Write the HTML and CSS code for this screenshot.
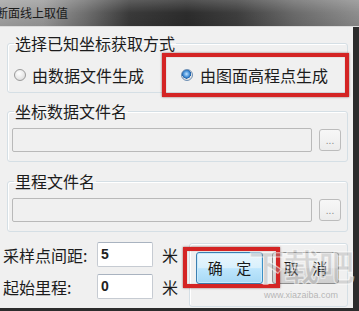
FILE: index.html
```html
<!DOCTYPE html>
<html lang="zh">
<head>
<meta charset="utf-8">
<title>断面线上取值</title>
<link rel="stylesheet" href="styles.css">
</head>
<body>
<div class="window">
  <div class="titlebar"><span class="title">断面线上取值</span></div>
  <div class="body">
    <fieldset class="group g1">
      <legend>选择已知坐标获取方式</legend>
      <div class="radios">
        <label class="radio"><span class="dot"></span>由数据文件生成</label>
        <label class="radio checked"><span class="dot"></span>由图面高程点生成</label>
      </div>
    </fieldset>
    <fieldset class="group g2">
      <legend>坐标数据文件名</legend>
      <div class="filerow">
        <div class="field"></div>
        <div class="browse">...</div>
      </div>
    </fieldset>
    <fieldset class="group g3">
      <legend>里程文件名</legend>
      <div class="filerow">
        <div class="field"></div>
        <div class="browse">...</div>
      </div>
    </fieldset>
    <div class="bottom">
      <div class="params">
        <div class="prow"><span class="plabel">采样点间距:</span><span class="pinput">5</span><span class="unit">米</span></div>
        <div class="prow"><span class="plabel">起始里程:</span><span class="pinput">0</span><span class="unit">米</span></div>
      </div>
      <div class="btnbox">
        <div class="btn primary">确&nbsp;&nbsp;&nbsp;&nbsp;定</div>
        <div class="btn">取&nbsp;&nbsp;&nbsp;&nbsp;消</div>
      </div>
    </div>
  </div>
  <div class="mark red1"></div>
  <div class="mark red2"></div>
  <div class="watermark"><span class="wm-big">下载吧</span><span class="wm-url">www.xiazaiba.com</span></div>
</div>
</body>
</html>
```
FILE: styles.css
```css
* { box-sizing: border-box; }
html, body { margin: 0; padding: 0; background: #f0f0f0; }
.window {
  position: relative;
  width: 359px;
  height: 311px;
  overflow: hidden;
  display: flex;
  flex-direction: column;
  font-family: "Noto Sans CJK SC", "Noto Sans", sans-serif;
  color: #1c1c1c;
}
.titlebar {
  height: 27px;
  flex: none;
  border-bottom: 1px solid #dcdcdc;
  background:
    linear-gradient(to bottom, rgba(255,255,255,0.18), rgba(255,255,255,0) 50%, rgba(0,0,0,0.08)),
    linear-gradient(to right, #a3a3a3 0%, #9a9a9a 12%, #6e6e6e 24%, #3a3a3a 36%, #2c2c2c 52%, #3e3e3e 66%, #6a6a6a 82%, #8e8e8e 100%);
  display: flex;
  align-items: center;
}
.title {
  margin-left: -4px;
  font-size: 12px;
  line-height: 14px;
  color: #1a1a1a;
}
.body {
  flex: 1;
  background: #f0f0f0;
  border-right: 6px solid #2c2c2c;
  border-bottom: 3px solid #2c2c2c;
  padding-top: 7px;
}
.group {
  margin: 0 5px 0 7px;
  padding: 0 5px 0 4px;
  border: 1px solid #d5dfe5;
  border-radius: 3px;
  min-inline-size: 0;
  box-shadow: inset 1px 1px 0 #fff;
}
.group legend {
  margin-left: 2px;
  padding: 0 1px;
  font-size: 16px;
  line-height: 18px;
}
.g2 { margin-top: 9px; }
.g3 { margin-top: 10px; }
.radios {
  display: flex;
  align-items: center;
  height: 20px;
  margin: 13px 0 7px;
}
.radio {
  display: flex;
  align-items: center;
  font-size: 16px;
  line-height: 20px;
}
.radio + .radio { margin-left: 35px; }
.dot {
  width: 12px;
  height: 12px;
  margin: 0 6px 0 2px;
  border-radius: 50%;
  border: 1px solid #9a9a9a;
  background: radial-gradient(circle at 40% 35%, #ffffff 0%, #e6e6e6 60%, #d0d0d0 100%);
}
.checked .dot {
  margin-right: 7px;
  border-color: #6d8fb4;
  background:
    radial-gradient(circle at 45% 40%, #bfe2ff 0%, #3d8ad4 40%, #1d5aa0 55%, rgba(0,0,0,0) 58%),
    radial-gradient(circle, #f4f4f4 0%, #dadada 100%);
}
.filerow {
  display: flex;
  align-items: center;
  margin: 8px 0 9px;
  height: 24px;
}
.field {
  width: 300px;
  height: 24px;
  border: 1px solid #b9b9b9;
  border-radius: 2px;
  background: #f0f0f0;
}
.browse {
  margin-left: 7px;
  width: 22px;
  height: 22px;
  border: 1px solid #bcbcbc;
  border-radius: 3px;
  background: linear-gradient(#f7f7f7, #ececec);
  color: #8a8a8a;
  font-family: "Liberation Sans", sans-serif;
  font-size: 10px;
  line-height: 22px;
  text-align: center;
  letter-spacing: 0;
}
.bottom {
  display: flex;
  margin-top: 10px;
}
.params {
  margin-left: 3px;
  display: flex;
  flex-direction: column;
  gap: 7px;
}
.prow {
  display: flex;
  align-items: center;
  height: 25px;
}
.plabel {
  width: 94px;
  font-size: 16px;
  line-height: 20px;
}
.pinput {
  width: 56px;
  height: 25px;
  background: #fff;
  border: 1px solid #c6cbd2;
  border-top-color: #a9b3c0;
  border-radius: 2px;
  padding-left: 3px;
  font-family: "Liberation Sans", sans-serif;
  font-weight: bold;
  font-size: 14px;
  line-height: 23px;
  color: #222;
}
.unit {
  margin-left: 9px;
  font-size: 16px;
  line-height: 20px;
}
.btnbox {
  margin: 1px 5px 0 11px;
  flex: 1;
  height: 64px;
  border: 1px solid #d5dfe5;
  border-radius: 3px;
  padding: 8px 0 0 6px;
  display: flex;
  gap: 9px;
  box-shadow: inset 1px 1px 0 #fff;
}
.btn {
  width: 67px;
  height: 32px;
  border: 1px solid #8e8f8f;
  border-radius: 3px;
  background: linear-gradient(#f6f6f6 0%, #e8e8e8 50%, #dadada 52%, #cfcfcf 100%);
  font-size: 15px;
  line-height: 30px;
  text-align: center;
  color: #1a1a1a;
}
.btn.primary {
  border-color: #3c7fb1;
  background: linear-gradient(#eaf6fd 0%, #d9f0fc 50%, #bee6fd 52%, #a7d9f5 100%);
  box-shadow: inset 0 0 0 1px #c8eafc;
}
.mark {
  position: absolute;
  border: 4px solid #d42424;
  box-shadow: 0 0 2px rgba(80,0,0,0.6), inset 0 0 1px rgba(80,0,0,0.5);
}
.red1 { left: 162px; top: 53px; width: 187px; height: 44px; }
.red2 { left: 183px; top: 247px; width: 97px; height: 41px; }
.watermark {
  position: absolute;
  left: 246px;
  top: 240px;
  width: 110px;
  display: flex;
  flex-direction: column;
  align-items: center;
  pointer-events: none;
  white-space: nowrap;
}
.wm-big {
  font-family: "Noto Sans CJK SC", sans-serif;
  font-weight: bold;
  font-size: 36px;
  line-height: 50px;
  color: rgba(160,160,160,0.35);
  -webkit-text-stroke: 1px rgba(255,255,255,0.6);
  letter-spacing: -1px;
}
.wm-url {
  font-family: "Liberation Sans", sans-serif;
  font-size: 9px;
  line-height: 10px;
  color: rgba(140,140,140,0.6);
}
```
